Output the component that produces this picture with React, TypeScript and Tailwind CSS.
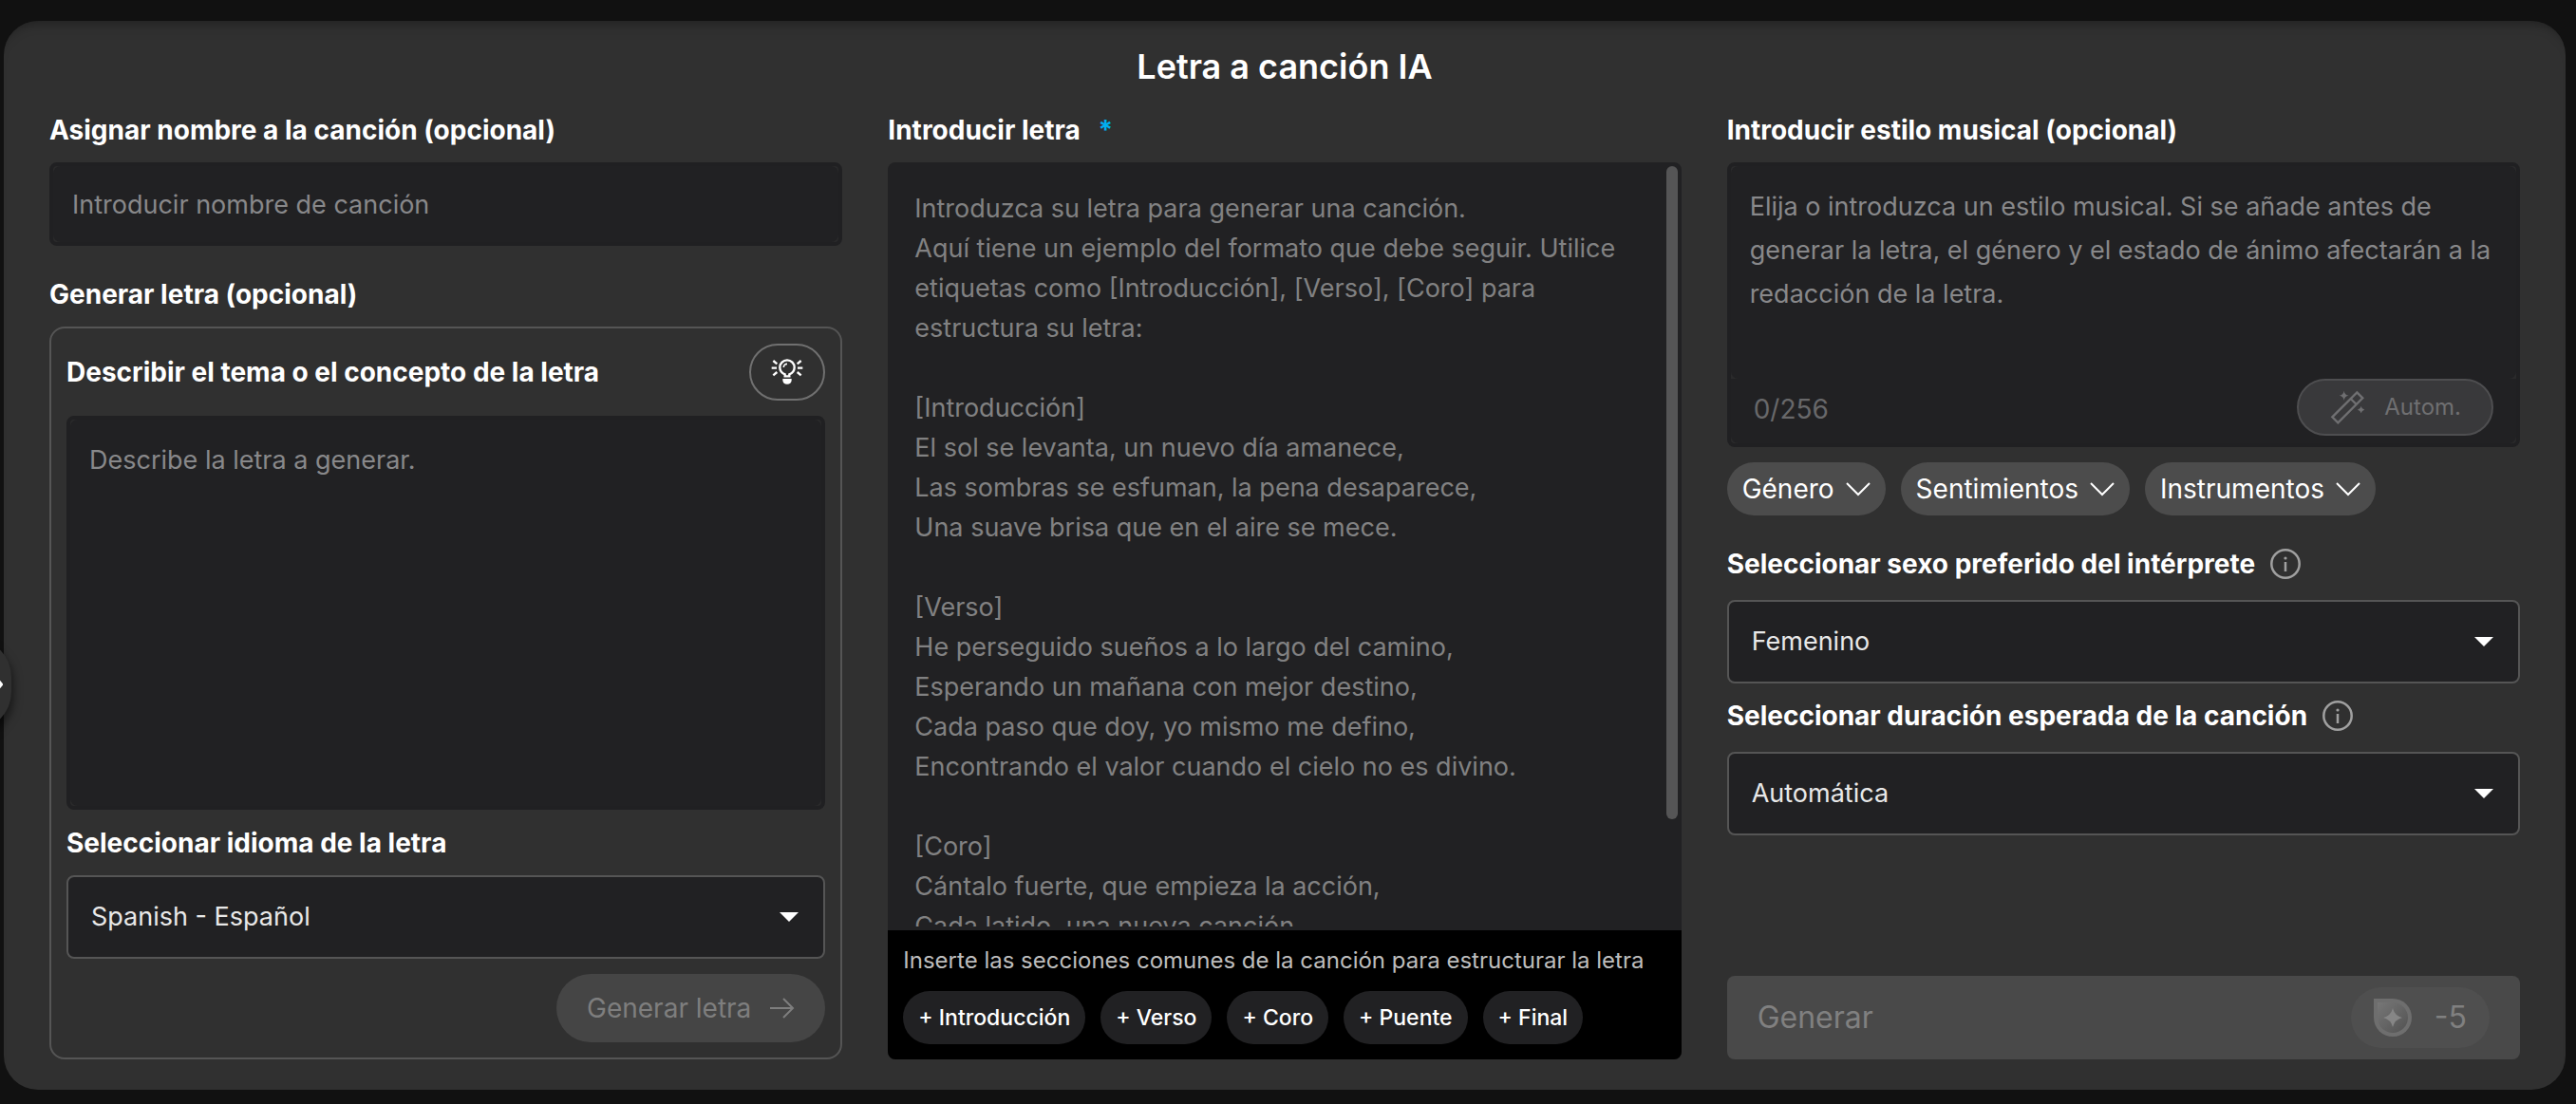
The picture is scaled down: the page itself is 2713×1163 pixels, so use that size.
import React, { useState } from 'react';

const SECTIONS = ['Introducción', 'Verso', 'Coro', 'Puente', 'Final'];
const STYLE_FILTERS = ['Género', 'Sentimientos', 'Instrumentos'];

const LYRICS_PLACEHOLDER = `Introduzca su letra para generar una canción.
Aquí tiene un ejemplo del formato que debe seguir. Utilice etiquetas como [Introducción], [Verso], [Coro] para estructura su letra:

[Introducción]
El sol se levanta, un nuevo día amanece,
Las sombras se esfuman, la pena desaparece,
Una suave brisa que en el aire se mece.

[Verso]
He perseguido sueños a lo largo del camino,
Esperando un mañana con mejor destino,
Cada paso que doy, yo mismo me defino,
Encontrando el valor cuando el cielo no es divino.

[Coro]
Cántalo fuerte, que empieza la acción,
Cada latido, una nueva canción.`;

const BulbIcon = () => (
    <svg width="34" height="34" viewBox="156 106 102 102" fill="none" stroke="currentColor" strokeWidth="7">
        <path d="M200 170v-6c-10-4-16-12-16-22a23 23 0 0 1 46 0c0 10-6 18-16 22v6z" />
        <path d="M196 142a11 11 0 0 1 11-11" strokeWidth="5" />
        <path d="M193 178h28v5c0 7-6 12-14 12s-14-5-14-12z" fill="currentColor" stroke="none" />
        <path d="M158 144h16M163 121l12 10M163 167l12-10M256 144h-16M251 121l-12 10M251 167l-12-10" />
    </svg>
);

const WandIcon = () => (
    <svg width="38" height="38" viewBox="160 88 114 114" fill="none" stroke="currentColor" strokeWidth="7">
        <path d="M248 98l18 18-78 78-18-18zM228 118l18 18" />
        <path d="M207 93q2 13 15 15q-13 2-15 15q-2-13-15-15q13-2 15-15zM261 142q2 9 11 11q-9 2-11 11q-2-9-11-11q9-2 11-11z" fill="currentColor" stroke="none" />
    </svg>
);

const CoinIcon = () => (
    <svg width="40" height="40" viewBox="0 0 40 40">
        <defs>
            <linearGradient id="coin" x1="0" y1="0" x2="1" y2="1">
                <stop offset="0" stopColor="#777777" />
                <stop offset="1" stopColor="#525252" />
            </linearGradient>
        </defs>
        <path d="M0 0h20a20 20 0 1 1-20 20z" fill="#6e6e6e" />
        <path d="M4 4h16a16 16 0 1 1-16 16z" fill="url(#coin)" />
        <path d="M20 10q2 8 10 10q-8 2-10 10q-2-8-10-10q8-2 10-10z" fill="#868686" />
    </svg>
);

const InfoIcon = () => (
    <svg width="32" height="32" viewBox="0 0 32 32" fill="none" stroke="#a0a0a0" strokeWidth="2.5">
        <circle cx="16" cy="16" r="14.7" />
        <path d="M16 14v10" />
        <circle cx="16" cy="10" r="1.6" fill="#a0a0a0" stroke="none" />
    </svg>
);

const ChevronDown = () => (
    <svg width="26" height="16" viewBox="0 0 26 16" fill="none" stroke="currentColor" strokeWidth="2">
        <path d="M1 2l12 12L25 2" />
    </svg>
);

const ArrowRight = () => (
    <svg width="26" height="24" viewBox="0 0 26 24" fill="none" stroke="currentColor" strokeWidth="2">
        <path d="M0 12h24M14 2l10 10-10 10" />
    </svg>
);

interface SelectProps {
    id: string;
    options: string[];
}

const Select: React.FC<SelectProps> = ({ id, options }) => (
    <div className="relative">
        <select
            id={id}
            className="block h-[88px] w-full appearance-none rounded-lg border-2 border-[#555555] bg-[#212123] px-6 text-[27px] text-[#e8e8e8]"
        >
            {options.map((option) => (
                <option key={option}>{option}</option>
            ))}
        </select>
        <svg
            className="pointer-events-none absolute right-7 top-1/2 -translate-y-1/2"
            width="20"
            height="10"
            viewBox="0 0 20 10"
            fill="#ffffff"
        >
            <path d="M0 0h20L10 10z" />
        </svg>
    </div>
);

const labelClass = 'text-[28px] leading-9 font-bold text-white';
const fieldClass = 'block w-full resize-none rounded-lg bg-[#212123] px-5 text-[27px] text-white outline-none placeholder:text-[#88888a]';
const frameClass = 'rounded-lg border-4 border-[#202022] bg-[#2a2a2b]';

const LyricsGenerator = () => (
    <section className="flex flex-col">
        <label htmlFor="song-name" className={labelClass}>Asignar nombre a la canción (opcional)</label>
        <div className={`mt-4 ${frameClass}`}>
            <input id="song-name" className={`h-20 ${fieldClass}`} placeholder="Introducir nombre de canción" />
        </div>

        <h2 className={`mt-[33px] ${labelClass}`}>Generar letra (opcional)</h2>
        <div className="mt-4 flex flex-1 flex-col rounded-2xl border-2 border-[#555555] p-4">
            <div className="flex items-center justify-between">
                <label htmlFor="topic" className={labelClass}>Describir el tema o el concepto de la letra</label>
                <button
                    aria-label="Inspiración"
                    className="flex h-[60px] w-20 items-center justify-center rounded-full border-2 border-[#707070] text-white"
                >
                    <BulbIcon />
                </button>
            </div>
            <div className={`mt-4 flex flex-1 ${frameClass}`}>
                <textarea id="topic" className={`py-5 leading-[46px] ${fieldClass}`} placeholder="Describe la letra a generar." />
            </div>
            <label htmlFor="language" className={`mt-[17px] mb-4 ${labelClass}`}>Seleccionar idioma de la letra</label>
            <Select id="language" options={['Spanish - Español', 'English', 'French - Français']} />
            <button
                disabled
                className="mt-4 flex h-[72px] items-center gap-5 self-end rounded-full bg-[#454545] px-8 text-[28px] text-[#7e7e7e]"
            >
                Generar letra
                <ArrowRight />
            </button>
        </div>
    </section>
);

const LyricsEditor = () => {
    const [lyrics, setLyrics] = useState('');

    return (
        <section className="flex flex-col">
            <label htmlFor="lyrics" className={labelClass}>
                Introducir letra <span className="ml-3 text-[#00aeef]">*</span>
            </label>
            <div className="mt-4 flex flex-1 flex-col overflow-hidden rounded-lg bg-[#212123]">
                <div className="relative flex flex-1 p-1">
                    <textarea
                        id="lyrics"
                        value={lyrics}
                        onChange={(e) => setLyrics(e.target.value)}
                        className="block w-full resize-none overflow-hidden p-6 pr-10 text-[27px] leading-[42px] text-white outline-none placeholder:text-[#818182]"
                        placeholder={LYRICS_PLACEHOLDER}
                    />
                    <div className="absolute right-1 top-1 h-[85%] w-3 rounded-full bg-[#555556]" />
                </div>
                <div className="bg-black p-4">
                    <p className="text-[24px] leading-8 text-[#bdbdbd]">
                        Inserte las secciones comunes de la canción para estructurar la letra
                    </p>
                    <div className="mt-4 flex gap-4">
                        {SECTIONS.map((section) => (
                            <button
                                key={section}
                                onClick={() => setLyrics(`${lyrics}[${section}]\n`)}
                                className="h-14 rounded-full bg-[#212123] px-4 text-[23px] font-medium text-white"
                            >
                                + {section}
                            </button>
                        ))}
                    </div>
                </div>
            </div>
        </section>
    );
};

const StylePanel = () => {
    const [style, setStyle] = useState('');

    return (
        <section className="flex flex-col">
            <label htmlFor="style" className={labelClass}>Introducir estilo musical (opcional)</label>
            <div className={`mt-4 ${frameClass}`}>
                <textarea
                    id="style"
                    value={style}
                    maxLength={256}
                    onChange={(e) => setStyle(e.target.value)}
                    className={`h-56 py-5 leading-[46px] ${fieldClass}`}
                    placeholder="Elija o introduzca un estilo musical. Si se añade antes de generar la letra, el género y el estado de ánimo afectarán a la redacción de la letra."
                />
                <div className="flex items-center justify-between rounded-b-lg bg-[#212123] pr-6 pb-2 pl-6">
                    <span className="pt-1 text-[28px] text-[#68686a]">{style.length}/256</span>
                    <button
                        disabled
                        className="flex h-[60px] items-center gap-5 rounded-full border-2 border-[#4e4e50] bg-[#39393b] px-8 text-[24px] text-[#6f6f71]"
                    >
                        <WandIcon />
                        Autom.
                    </button>
                </div>
            </div>
            <div className="mt-4 flex gap-4">
                {STYLE_FILTERS.map((filter) => (
                    <button key={filter} className="flex h-14 items-center gap-3 rounded-full bg-[#4c4c4c] px-4 text-[28px] text-white">
                        {filter}
                        <ChevronDown />
                    </button>
                ))}
            </div>

            <div className="mt-[33px] mb-5 flex items-center gap-4">
                <label htmlFor="gender" className={labelClass}>Seleccionar sexo preferido del intérprete</label>
                <InfoIcon />
            </div>
            <Select id="gender" options={['Femenino', 'Masculino']} />
            <div className="mt-4 mb-5 flex items-center gap-4">
                <label htmlFor="duration" className={labelClass}>Seleccionar duración esperada de la canción</label>
                <InfoIcon />
            </div>
            <Select id="duration" options={['Automática', '1 min', '2 min', '3 min']} />

            <button
                disabled
                className="mt-auto flex h-[88px] items-center justify-between rounded-lg bg-[#494949] px-8 text-[32px] text-[#808080]"
            >
                Generar
                <span className="flex h-16 items-center gap-6 rounded-full bg-[#4f4f4f] px-6">
                    <CoinIcon />
                    -5
                </span>
            </button>
        </section>
    );
};

const App: React.FC = () => {
    return (
        <div className="relative flex min-h-screen flex-col overflow-hidden bg-[#111111] pt-[22px] pr-[11px] pb-[15px] pl-1 font-['Inter',sans-serif]">
            <main className="flex flex-1 flex-col rounded-[36px] bg-[#303030] px-12 pt-6 pb-8 shadow-[inset_0_12px_12px_-10px_rgba(0,0,0,0.35)]">
                <h1 className="mb-[25px] text-center text-[36px] leading-[48px] font-semibold text-white">Letra a canción IA</h1>
                <div className="grid flex-1 grid-cols-3 gap-12">
                    <LyricsGenerator />
                    <LyricsEditor />
                    <StylePanel />
                </div>
            </main>

            {/* Drawer handle, mostly hidden past the left edge */}
            <button
                aria-label="Abrir panel"
                className="absolute top-[62%] -left-[68px] flex h-24 w-20 -translate-y-1/2 items-center justify-end rounded-[40px] bg-[#303030] pr-2 text-white shadow-[2px_6px_10px_rgba(0,0,0,0.5)]"
            >
                <svg width="10" height="18" viewBox="0 0 10 18" fill="none" stroke="currentColor" strokeWidth="4" strokeLinecap="round" strokeLinejoin="round">
                    <path d="M1 2l6 7-6 7" />
                </svg>
            </button>
        </div>
    );
};

export default App;
